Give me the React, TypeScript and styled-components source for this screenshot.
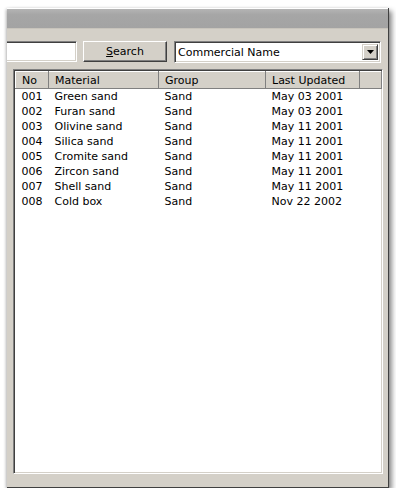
import React from 'react';
import styled, { createGlobalStyle } from 'styled-components';

const GlobalStyle = createGlobalStyle`
	html, body {
		margin: 0;
		padding: 0;
		background: #ffffff;
	}
	body {
		font-family: 'DejaVu Sans', Tahoma, sans-serif;
		font-size: 11px;
		color: #000000;
	}
`;

const Window = styled.div`
	margin: 8px 0 0 7px;
	width: 381px;
	height: 479px;
	display: flex;
	flex-direction: column;
	background: #d4d0c8;
	border-right: 1px solid #404040;
	border-bottom: 1px solid #404040;
	box-shadow: 3px 3px 5px rgba(0, 0, 0, 0.45), -1px 1px 3px rgba(0, 0, 0, 0.25);
	overflow: hidden;
`;

const TitleBar = styled.div`
	height: 19px;
	border-top: 1px solid #ffffff;
	background: linear-gradient(to bottom, #b4b4b4 0%, #a6a6a6 30%, #a3a3a3 100%);
	border-bottom: 1px solid #c8c4bc;
`;

const Body = styled.div`
	flex: 1;
	display: flex;
	flex-direction: column;
	padding: 12px 5px 13px 6px;
	gap: 6px;
`;

const Toolbar = styled.div`
	display: flex;
	align-items: flex-start;
	margin-left: -6px;
`;

const sunken = `
	border-top: 1px solid #808080;
	border-left: 1px solid #808080;
	border-right: 1px solid #ffffff;
	border-bottom: 1px solid #ffffff;
	box-shadow: inset 1px 1px 0 #404040, inset -1px -1px 0 #d4d0c8;
`;

const TextInput = styled.div`
	width: 70px;
	height: 21px;
	box-sizing: border-box;
	background: #ffffff;
	border-top: 1px solid #808080;
	border-right: 1px solid #ffffff;
	border-bottom: 1px solid #ffffff;
	box-shadow: inset 0 1px 0 #404040, inset 0 -1px 0 #d4d0c8, inset -1px 0 0 #d4d0c8;
`;

const Button = styled.div`
	margin-left: 6px;
	width: 84px;
	height: 21px;
	box-sizing: border-box;
	display: flex;
	align-items: center;
	justify-content: center;
	background: #d4d0c8;
	border-top: 1px solid #ffffff;
	border-left: 1px solid #ffffff;
	border-right: 1px solid #404040;
	border-bottom: 1px solid #404040;
	box-shadow: inset -1px -1px 0 #808080;
	u {
		text-decoration: underline;
	}
`;

const Combo = styled.div`
	margin-left: 7px;
	width: 207px;
	height: 22px;
	box-sizing: border-box;
	display: flex;
	align-items: center;
	background: #ffffff;
	padding: 2px;
	${sunken}
	span {
		flex: 1;
		padding-left: 1px;
	}
`;

const DropButton = styled.div`
	width: 16px;
	height: 16px;
	box-sizing: border-box;
	display: flex;
	align-items: center;
	justify-content: center;
	background: #d4d0c8;
	border-top: 1px solid #d4d0c8;
	border-left: 1px solid #d4d0c8;
	border-right: 1px solid #404040;
	border-bottom: 1px solid #404040;
	box-shadow: inset 1px 1px 0 #ffffff, inset -1px -1px 0 #808080;
`;

const ListView = styled.div`
	flex: 1;
	display: flex;
	flex-direction: column;
	background: #ffffff;
	${sunken}
	padding: 1px;
`;

const Table = styled.table`
	border-collapse: collapse;
	table-layout: fixed;
	width: 100%;
	font-size: 11px;
`;

const HeadCell = styled.th<{ $w: number }>`
	width: ${({ $w }) => $w}px;
	height: 17px;
	box-sizing: border-box;
	padding: 0 0 0 6px;
	text-align: left;
	font-weight: normal;
	background: #d4d0c8;
	border-top: 1px solid #ffffff;
	border-left: 1px solid #ffffff;
	border-right: 1px solid #808080;
	border-bottom: 1px solid #808080;
	white-space: nowrap;
	overflow: hidden;
`;

const Cell = styled.td`
	height: 15px;
	padding: 0 0 0 6px;
	white-space: nowrap;
	overflow: hidden;
	line-height: 15px;
`;

const columns = [
	{ label: 'No', w: 33 },
	{ label: 'Material', w: 110 },
	{ label: 'Group', w: 107 },
	{ label: 'Last Updated', w: 94 },
	{ label: '', w: 22 },
];

const rows = [
	['001', 'Green sand', 'Sand', 'May 03 2001'],
	['002', 'Furan sand', 'Sand', 'May 03 2001'],
	['003', 'Olivine sand', 'Sand', 'May 11 2001'],
	['004', 'Silica sand', 'Sand', 'May 11 2001'],
	['005', 'Cromite sand', 'Sand', 'May 11 2001'],
	['006', 'Zircon sand', 'Sand', 'May 11 2001'],
	['007', 'Shell sand', 'Sand', 'May 11 2001'],
	['008', 'Cold box', 'Sand', 'Nov 22 2002'],
];

const App: React.FunctionComponent = () => {
	return (
		<>
			<GlobalStyle />
			<Window>
				<TitleBar />
				<Body>
					<Toolbar>
						<TextInput />
						<Button>
							<span>
								<u>S</u>earch
							</span>
						</Button>
						<Combo>
							<span>Commercial Name</span>
							<DropButton>
								<svg width="7" height="4" viewBox="0 0 7 4">
									<path d="M0 0h7L3.5 4z" fill="#000" />
								</svg>
							</DropButton>
						</Combo>
					</Toolbar>
					<ListView>
						<Table>
							<thead>
								<tr>
									{columns.map((c, i) => (
										<HeadCell key={i} $w={c.w}>
											{c.label}
										</HeadCell>
									))}
								</tr>
							</thead>
							<tbody>
								{rows.map((r) => (
									<tr key={r[0]}>
										{r.map((v, i) => (
											<Cell key={i}>{v}</Cell>
										))}
										<Cell />
									</tr>
								))}
							</tbody>
						</Table>
					</ListView>
				</Body>
			</Window>
		</>
	);
};

export default App;
